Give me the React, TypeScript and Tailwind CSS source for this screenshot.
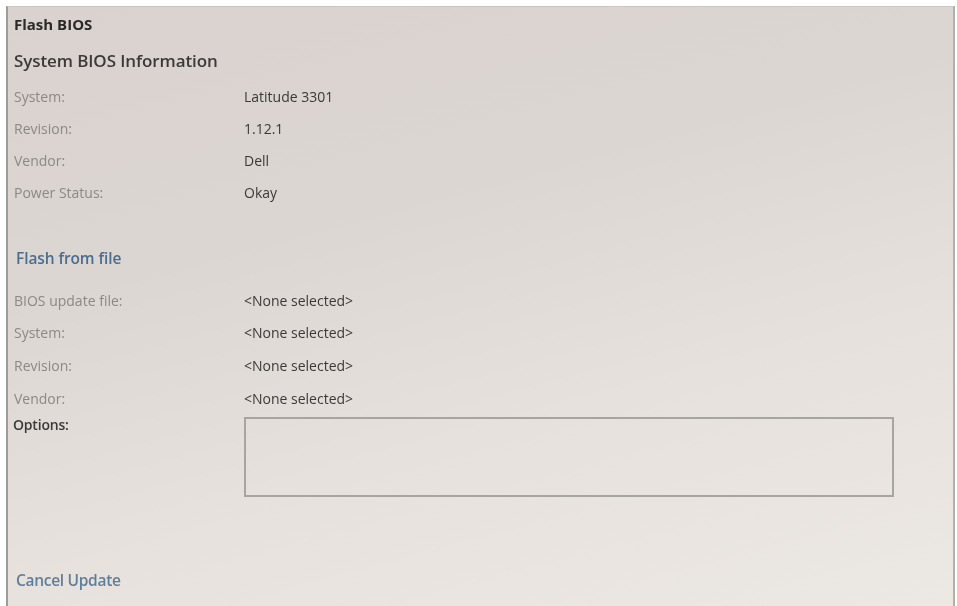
import React from "react";

const font = { fontFamily: '"Open Sans", "Noto Sans", sans-serif' };

function Row({ label, value, h = "h-[32px]" }: { label: string; value: string; h?: string }) {
  return (
    <div className={`flex items-center ${h}`}>
      <div className="w-[236px] pl-[6px] text-[14px] text-[#8d8883] tracking-[0px]">{label}</div>
      <div className="text-[14px] text-[#3b3937] tracking-[0px]">{value}</div>
    </div>
  );
}

export default function App() {
  return (
    <div className="w-[957px] h-[606px] bg-white overflow-hidden" style={font}>
      <div className="ml-[6px] mt-[6px] w-[949px] h-[600px] border-l-2 border-l-[#9c9c9e] border-t border-t-[#c9c6c4] border-r-2 border-r-[#b3afad] bg-[linear-gradient(165deg,#d9d2ce_0%,#dcd6d2_35%,#e6e1dd_65%,#ece8e3_100%)] blur-[0.5px]">
        <div className="flex flex-col">
          <div className="h-[35px] flex items-center pl-[6px] text-[15px] font-bold text-[#2b2a29] tracking-[0px]">Flash BIOS</div>
          <div className="h-[38px] flex items-center pl-[6px] text-[17px] font-semibold text-[#3c3a38] tracking-[-0.1px]">System BIOS Information</div>
          <Row label="System:" value="Latitude 3301" />
          <Row label="Revision:" value="1.12.1" />
          <Row label="Vendor:" value="Dell" h="h-[33px]" />
          <Row label="Power Status:" value="Okay" h="h-[31px]" />
          <div className="h-[35px]" />
          <div className="h-[32px] flex items-center pl-[8px] text-[15.5px] font-semibold text-[#4b6d8e] tracking-[-0.1px]">Flash from file</div>
          <div className="h-[9px]" />
          <Row label="BIOS update file:" value="<None selected>" />
          <Row label="System:" value="<None selected>" h="h-[33px]" />
          <Row label="Revision:" value="<None selected>" h="h-[33px]" />
          <Row label="Vendor:" value="<None selected>" h="h-[33px]" />
          <div className="flex mt-[2px]">
            <div className="w-[236px] pl-[5px] -mt-[3px] text-[14px] font-semibold text-[#3b3937] tracking-[-0.2px]">Options:</div>
            <div className="w-[650px] h-[80px] border-2 border-[#a8a4a1]" />
          </div>
          <div className="h-[68px]" />
          <div className="h-[32px] flex items-center pl-[8px] text-[15.5px] font-semibold text-[#5f7f99] tracking-[-0.3px]">Cancel Update</div>
        </div>
      </div>
    </div>
  );
}
